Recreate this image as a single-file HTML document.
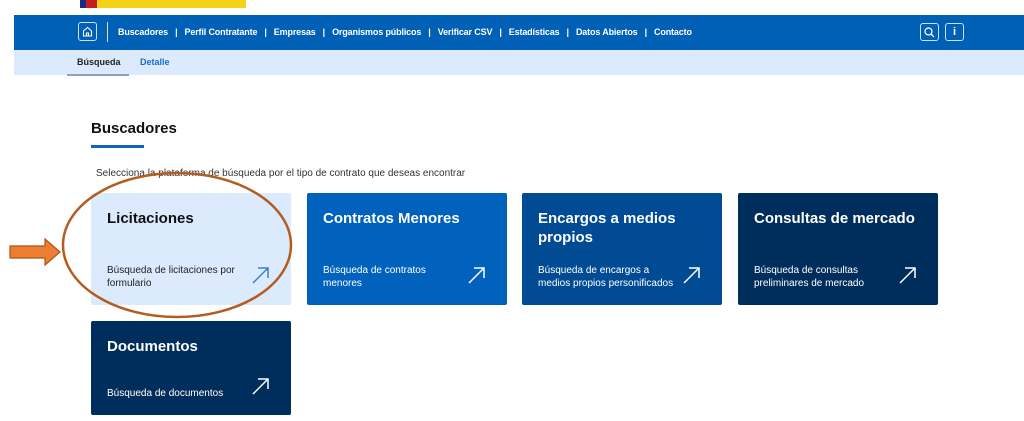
<!DOCTYPE html>
<html><head><meta charset="utf-8"><style>
*{margin:0;padding:0;box-sizing:border-box}
body{width:1024px;height:421px;background:#fff;position:relative;overflow:hidden;font-family:"Liberation Sans",Arial,sans-serif}
.abs{position:absolute}
.nav{left:14px;top:15px;width:1010px;height:35px;background:#0060b6}
.sub{left:14px;top:50px;width:1010px;height:25px;background:#dbeafd}
.navt{top:27px;color:#fff;font-size:9px;font-weight:bold;letter-spacing:-0.15px;white-space:nowrap}
.card{position:absolute;width:200px;border-radius:2px;color:#fff}
.card h3{position:absolute;left:16px;top:16px;font-size:15px;font-weight:bold;line-height:19px}
.card p{position:absolute;left:16px;font-size:10px;line-height:12.5px}
.card svg{position:absolute}
</style></head><body>
<div class="abs" style="left:80px;top:0;width:6px;height:8px;background:#1a2a80"></div>
<div class="abs" style="left:86px;top:0;width:11px;height:8px;background:#c41e1e"></div>
<div class="abs" style="left:97px;top:0;width:149px;height:8px;background:#f7d117"></div>
<div class="abs nav"></div>
<div class="abs" style="left:78px;top:22px;width:19px;height:19px;border:1.5px solid #cfe0f5;border-radius:3px"></div>
<svg class="abs" style="left:81px;top:25px" width="13" height="13" viewBox="0 0 13 13"><path d="M2.5 6 L6.5 2.5 L10.5 6 V11 H2.5 Z M5.5 11 V8 H7.5 V11" fill="none" stroke="#fff" stroke-width="1.1"/></svg>
<div class="abs" style="left:107px;top:22px;width:1px;height:20px;background:#cfe0f5"></div>
<div class="abs navt" style="left:118px">Buscadores &nbsp;&nbsp;|&nbsp;&nbsp; Perfil Contratante &nbsp;&nbsp;|&nbsp;&nbsp; Empresas &nbsp;&nbsp;|&nbsp;&nbsp; Organismos públicos &nbsp;&nbsp;|&nbsp;&nbsp; Verificar CSV &nbsp;&nbsp;|&nbsp;&nbsp; Estadísticas &nbsp;&nbsp;|&nbsp;&nbsp; Datos Abiertos &nbsp;&nbsp;|&nbsp;&nbsp; Contacto</div>
<div class="abs" style="left:920px;top:23px;width:19px;height:18px;border:1px solid #cfe0f5;border-radius:3px"></div>
<svg class="abs" style="left:923px;top:26px" width="13" height="13"><circle cx="5.5" cy="5.5" r="3.5" fill="none" stroke="#fff" stroke-width="1.2"/><path d="M8 8 L11 11" stroke="#fff" stroke-width="1.3"/></svg>
<div class="abs" style="left:945px;top:23px;width:19px;height:18px;border:1px solid #cfe0f5;border-radius:3px;color:#fff;font-size:11px;font-weight:bold;text-align:center;line-height:16px">i</div>
<div class="abs sub"></div>
<div class="abs" style="left:77px;top:57px;font-size:9px;font-weight:bold;color:#222">Búsqueda</div>
<div class="abs" style="left:67px;top:74px;width:62px;height:2px;background:#8aa4c0"></div>
<div class="abs" style="left:140px;top:57px;font-size:9px;font-weight:bold;color:#1a6fc4">Detalle</div>
<div class="abs" style="left:91px;top:120px;font-size:15px;font-weight:bold;color:#111">Buscadores</div>
<div class="abs" style="left:91px;top:145px;width:53px;height:3px;background:#0a64c0"></div>
<div class="abs" style="left:96px;top:168px;font-size:10px;color:#333">Selecciona la plataforma de búsqueda por el tipo de contrato que deseas encontrar</div>

<div class="card" style="left:91px;top:193px;height:112px;background:#dbeafd;color:#111"><h3>Licitaciones</h3><p style="top:72px;color:#222">Búsqueda de licitaciones por<br>formulario</p><svg style="left:160px;top:72px" width="20" height="20"><path d="M2 18 L17 3 M7 3 H17 V13" fill="none" stroke="#3a7fd0" stroke-width="1.5"/></svg></div>
<div class="card" style="left:307px;top:193px;height:112px;background:#0062bd"><h3>Contratos Menores</h3><p style="top:72px">Búsqueda de contratos<br>menores</p><svg style="left:160px;top:72px" width="20" height="20"><path d="M2 18 L17 3 M7 3 H17 V13" fill="none" stroke="#fff" stroke-width="1.5"/></svg></div>
<div class="card" style="left:522px;top:193px;height:112px;background:#004b93"><h3>Encargos a medios<br>propios</h3><p style="top:72px">Búsqueda de encargos a<br>medios propios personificados</p><svg style="left:160px;top:72px" width="20" height="20"><path d="M2 18 L17 3 M7 3 H17 V13" fill="none" stroke="#fff" stroke-width="1.5"/></svg></div>
<div class="card" style="left:738px;top:193px;height:112px;background:#002e5c"><h3>Consultas de mercado</h3><p style="top:72px">Búsqueda de consultas<br>preliminares de mercado</p><svg style="left:160px;top:72px" width="20" height="20"><path d="M2 18 L17 3 M7 3 H17 V13" fill="none" stroke="#fff" stroke-width="1.5"/></svg></div>
<div class="card" style="left:91px;top:321px;height:94px;background:#002e5c"><h3>Documentos</h3><p style="top:67px">Búsqueda de documentos</p><svg style="left:160px;top:55px" width="20" height="20"><path d="M2 18 L17 3 M7 3 H17 V13" fill="none" stroke="#fff" stroke-width="1.5"/></svg></div>

<svg class="abs" style="left:0;top:0" width="1024" height="421">
<ellipse cx="177" cy="245" rx="114" ry="72" fill="none" stroke="#b35c1e" stroke-width="2.5"/>
<path d="M10 246 H45 V239 L60 252 L45 265 V258 H10 Z" fill="#ed7d31" stroke="#a9541a" stroke-width="1.2"/>
</svg>
</body></html>
